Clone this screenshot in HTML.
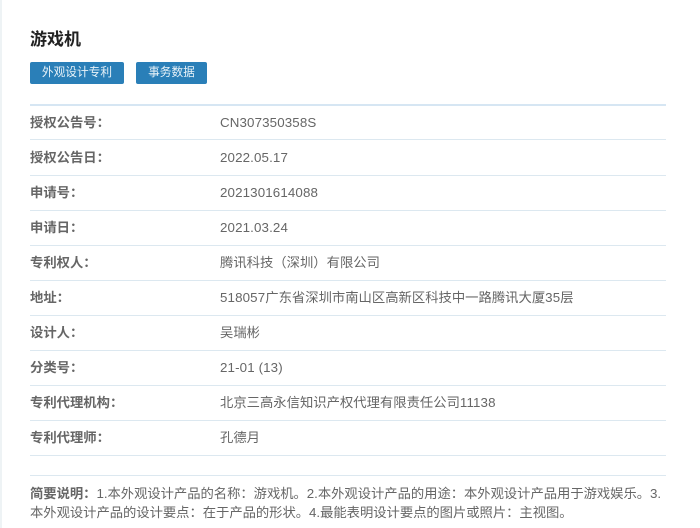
<!DOCTYPE html>
<html lang="zh">
<head>
<meta charset="utf-8">
<style>
html,body{margin:0;padding:0;background:#fff}
body{width:700px;height:528px;overflow:hidden;position:relative;font-family:"Liberation Sans","Noto Sans CJK SC","WenQuanYi Zen Hei",sans-serif;color:#666;font-size:13.33px}
#w{position:absolute;left:0;top:0;width:700px;height:528px;filter:blur(.3px)}
.strip{position:absolute;left:0;top:0;width:2px;height:528px;background:#eef3f5}
h1{position:absolute;left:30px;top:29px;margin:0;font-size:17px;line-height:22px;font-weight:bold;color:#222}
.btn{position:absolute;top:62px;height:22px;line-height:22px;background:#2a7fb8;color:#e8f2f8;font-size:11.7px;text-align:center;border-radius:2px}
.line{position:absolute;left:30px;width:636px;height:1px;background:#dce8f0}
.k,.v{position:absolute;line-height:18px;white-space:nowrap}
.k{left:30px;font-weight:bold;color:#666}
.v{left:220px}
i{font-style:normal;letter-spacing:.13px}
.desc{position:absolute;left:30px;top:484px;width:640px;line-height:19px;white-space:nowrap;letter-spacing:-.04px}
.desc b{color:#666}
</style>
</head>
<body>
<div id="w">
<div class="strip"></div>
<h1>游戏机</h1>
<div class="btn" style="left:30px;width:94px">外观设计专利</div>
<div class="btn" style="left:136px;width:71px">事务数据</div>
<div class="line" style="top:104px;height:2px;background:#d6e6f3"></div>

<div class="k" style="top:114px">授权公告号：</div><div class="v" style="top:114px"><i>CN307350358S</i></div>
<div class="line" style="top:139px"></div>
<div class="k" style="top:149px">授权公告日：</div><div class="v" style="top:149px"><i>2022.05.17</i></div>
<div class="line" style="top:175px"></div>
<div class="k" style="top:184px">申请号：</div><div class="v" style="top:184px"><i>2021301614088</i></div>
<div class="line" style="top:210px"></div>
<div class="k" style="top:219px">申请日：</div><div class="v" style="top:219px"><i>2021.03.24</i></div>
<div class="line" style="top:245px"></div>
<div class="k" style="top:254px">专利权人：</div><div class="v" style="top:254px">腾讯科技（深圳）有限公司</div>
<div class="line" style="top:280px"></div>
<div class="k" style="top:289px">地址：</div><div class="v" style="top:289px"><i>518057</i>广东省深圳市南山区高新区科技中一路腾讯大厦<i>35</i>层</div>
<div class="line" style="top:315px"></div>
<div class="k" style="top:324px">设计人：</div><div class="v" style="top:324px">吴瑞彬</div>
<div class="line" style="top:350px"></div>
<div class="k" style="top:359px">分类号：</div><div class="v" style="top:359px"><i>21-01 (13)</i></div>
<div class="line" style="top:385px"></div>
<div class="k" style="top:394px">专利代理机构：</div><div class="v" style="top:394px">北京三高永信知识产权代理有限责任公司<i>11138</i></div>
<div class="line" style="top:420px"></div>
<div class="k" style="top:429px">专利代理师：</div><div class="v" style="top:429px">孔德月</div>
<div class="line" style="top:455px"></div>
<div class="line" style="top:475px"></div>
<div class="desc"><b>简要说明：</b>1.本外观设计产品的名称：游戏机。2.本外观设计产品的用途：本外观设计产品用于游戏娱乐。3.<br>本外观设计产品的设计要点：在于产品的形状。4.最能表明设计要点的图片或照片：主视图。</div>
</div>
</body>
</html>
